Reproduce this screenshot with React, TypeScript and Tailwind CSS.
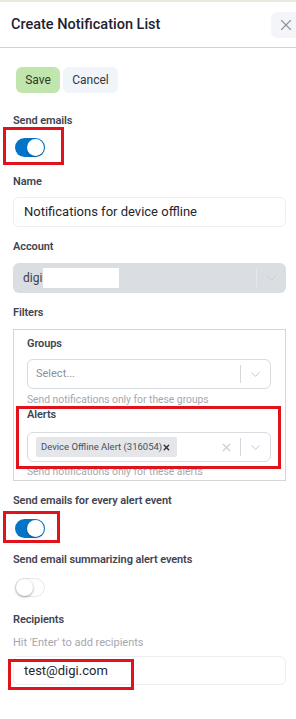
import { X, ChevronDown } from "lucide-react";

const RedBox = ({ className }: { className: string }) => (
  <span className={`pointer-events-none absolute border-[3px] border-[#e0121b] ${className}`} />
);

const Toggle = ({ on }: { on: boolean }) =>
  on ? (
    <div className="flex h-[19px] w-[30px] items-center justify-end rounded-full bg-[#0474c9] pr-[1px]">
      <div className="h-[17px] w-[17px] rounded-full bg-white shadow-[0_1px_2px_rgba(0,0,0,0.3)]" />
    </div>
  ) : (
    <div className="flex h-[19px] w-[30px] items-center justify-start rounded-full border border-[#e5e7eb] bg-white">
      <div className="h-[17px] w-[17px] rounded-full bg-white shadow-[0_1px_3px_rgba(0,0,0,0.35)]" />
    </div>
  );

const Label = ({ children, className = "" }: { children: React.ReactNode; className?: string }) => (
  <div className={`text-[11px] font-semibold leading-[16px] tracking-[-0.1px] text-[#3f4451] ${className}`}>{children}</div>
);

const Indicators = ({ clear }: { clear?: boolean }) => (
  <div className="flex h-full items-center">
    {clear && <X size={13} strokeWidth={2.5} className="mr-[7px] text-[#cfd2d6]" />}
    <div className="h-[18px] w-px bg-[#d4d6da]" />
    <div className="flex w-[29px] justify-center">
      <ChevronDown size={15} strokeWidth={1.6} className="text-[#c4c7cc]" />
    </div>
  </div>
);

export default function App() {
  return (
    <div className="relative h-[719px] w-[296px] overflow-hidden bg-white font-['Roboto',sans-serif]">
      <div className="h-[2px] bg-[#e7e9de]" />
      <div className="flex h-[46px] items-center justify-between border-b border-[#cdd3dc] pl-[11px]">
        <div className="text-[14.5px] font-medium text-[#1f2130]">Create Notification List</div>
        <div className="-mr-[4px] mt-[1px] flex h-[26px] w-[29px] items-center justify-center rounded-md bg-[#f3f5f8]">
          <X size={18} strokeWidth={1.5} className="text-[#8e939b]" />
        </div>
      </div>

      <div className="pl-[13px] pr-[10px]">
        <div className="mt-[19px] flex gap-[3px] pl-[3px]">
          <div className="flex h-[26px] w-[44px] items-center justify-center rounded-md bg-[#c1e6ad] text-[12px] text-[#2c3a2a]">
            Save
          </div>
          <div className="flex h-[26px] w-[55px] items-center justify-center rounded-md bg-[#f1f4f8] text-[12px] text-[#333843]">
            Cancel
          </div>
        </div>

        <Label className="mt-[20px]">Send emails</Label>
        <div className="relative ml-[2px] mt-[9px] w-[30px]">
          <Toggle on />
          <RedBox className="-bottom-[8px] -left-[12px] -right-[19px] -top-[11px]" />
        </div>

        <Label className="mt-[17px]">Name</Label>
        <div className="mt-[7px] flex h-[30px] items-center rounded-md border border-[#eceef1] px-[10px] text-[13px] text-[#23262e]">
          Notifications for device offline
        </div>

        <Label className="mt-[12px]">Account</Label>
        <div className="mt-[8px] flex h-[30px] items-center justify-between rounded-md bg-[#dadde2] pl-[10px]">
          <div className="flex items-center text-[12px] text-[#3a3e46]">
            digi
            <span className="ml-[1px] h-[20px] w-[76px] bg-white" />
          </div>
          <div className="flex h-full items-center">
            <div className="h-[18px] w-px bg-[#e6e8eb]" />
            <div className="flex w-[29px] justify-center">
              <ChevronDown size={15} strokeWidth={1.6} className="text-[#c9ccd1]" />
            </div>
          </div>
        </div>

        <Label className="mt-[12px]">Filters</Label>
        <div className="mt-[8px] border border-[#d3d6db] pb-[1px] pl-[13px] pr-[14px] pt-[6px]">
          <Label>Groups</Label>
          <div className="mt-[7px] flex h-[30px] items-center justify-between rounded-md border border-[#d8dbe0] pl-[8px]">
            <span className="text-[11px] text-[#8a8f98]">Select...</span>
            <Indicators />
          </div>
          <div className="mt-[4px] text-[10.3px] leading-[14px] text-[#a3a8b0]">Send notifications only for these groups</div>
          <div className="relative">
            <Label className="leading-[14px]">Alerts</Label>
            <div className="mt-[9px] flex h-[30px] items-center justify-between rounded-md border border-[#d8dbe0] pl-[8px]">
              <div className="flex h-[20px] w-[141px] shrink-0 items-center justify-between whitespace-nowrap rounded-[2px] bg-[#e4e6ea] pl-[5px] pr-[6px] text-[9.5px] text-[#4a4f58]">
                <span>Device Offline Alert (316054)</span>
                <X size={9} strokeWidth={3.5} className="text-[#2a2d33]" />
              </div>
              <Indicators clear />
            </div>
            <RedBox className="-bottom-[7px] -left-[11px] -right-[10px] -top-[1px]" />
          </div>
          <div className="mt-[3px] text-[10.3px] leading-[14px] text-[#a3a8b0]">Send notifications only for these alerts</div>
        </div>

        <Label className="mt-[12px]">Send emails for every alert event</Label>
        <div className="relative ml-[2px] mt-[10px] w-[30px]">
          <Toggle on />
          <RedBox className="-bottom-[5px] -left-[12px] -right-[15px] -top-[8px]" />
        </div>

        <Label className="mt-[14px]">Send email summarizing alert events</Label>
        <div className="ml-[2px] mt-[10px] w-[30px]">
          <Toggle on={false} />
        </div>

        <Label className="mt-[15px]">Recipients</Label>
        <div className="mt-[7px] text-[11px] leading-[16px] text-[#a3a8b0]">Hit 'Enter' to add recipients</div>
        <div className="relative mt-[5px] flex h-[29px] items-center rounded-md border border-[#eceef1] px-[10px] text-[13px] text-[#23262e]">
          test@digi.com
          <RedBox className="-left-[6px] top-[2px] h-[31px] w-[126px]" />
        </div>
      </div>
    </div>
  );
}
